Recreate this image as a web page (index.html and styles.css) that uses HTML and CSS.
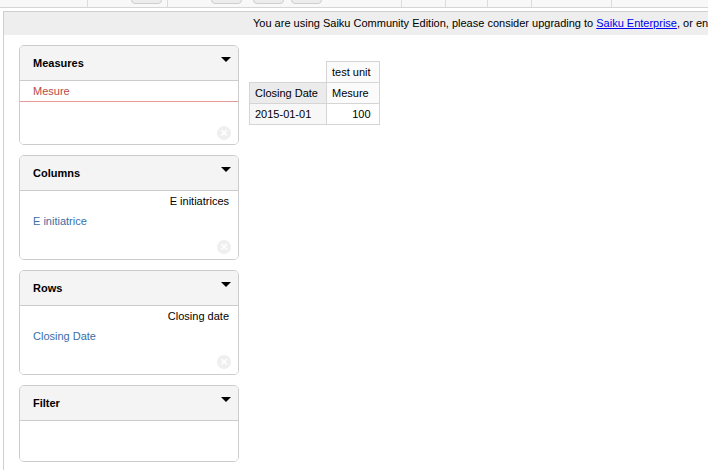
FILE: index.html
```html
<!DOCTYPE html>
<html lang="en">
  <head>
    <meta charset="UTF-8" />
    <meta name="viewport" content="width=device-width, initial-scale=1.0" />
    <title>Saiku</title>
    <link rel="stylesheet" href="styles.css">
  </head>
  <body>
    <div class="toolbar">
      <div class="seg seg-a"></div>
      <div class="seg seg-b"><span class="tbtn tbtn-1"></span></div>
      <div class="seg seg-c">
        <span class="tbtn tbtn-2"></span>
        <span class="tbtn tbtn-3"></span>
        <span class="tbtn tbtn-4"></span>
      </div>
      <div class="seg seg-d"></div>
      <div class="seg seg-e"></div>
      <div class="seg seg-f"></div>
      <div class="seg seg-g"></div>
      <div class="seg seg-h"></div>
    </div>

    <main class="workspace">
      <div class="upgrade">
        You are using Saiku Community Edition, please consider upgrading to <a href="#">Saiku Enterprise</a>, or entering a sponsorship agreement with us to support development.
      </div>

      <div class="workarea">
        <section class="drop-panels">
          <div class="card card-measures">
            <div class="card-head">
              <h3>Measures</h3>
              <span class="caret"></span>
            </div>
            <div class="card-body">
              <div class="measure">Mesure</div>
              <span class="clear">&times;</span>
            </div>
          </div>

          <div class="card card-axis">
            <div class="card-head">
              <h3>Columns</h3>
              <span class="caret"></span>
            </div>
            <div class="card-body">
              <div class="dim-name">E initiatrices</div>
              <div class="level">E initiatrice</div>
              <span class="clear">&times;</span>
            </div>
          </div>

          <div class="card card-axis">
            <div class="card-head">
              <h3>Rows</h3>
              <span class="caret"></span>
            </div>
            <div class="card-body">
              <div class="dim-name">Closing date</div>
              <div class="level">Closing Date</div>
              <span class="clear">&times;</span>
            </div>
          </div>

          <div class="card card-filter">
            <div class="card-head">
              <h3>Filter</h3>
              <span class="caret"></span>
            </div>
            <div class="card-body"></div>
          </div>
        </section>

        <section class="result">
          <table class="pivot">
            <tr>
              <td class="blank"></td>
              <th class="col-head">test unit</th>
            </tr>
            <tr>
              <th class="row-head">Closing Date</th>
              <th class="col-head">Mesure</th>
            </tr>
            <tr>
              <th class="row-member">2015-01-01</th>
              <td class="data">100</td>
            </tr>
          </table>
        </section>
      </div>
    </main>
  </body>
</html>
```

FILE: styles.css
```css
body {
  margin: 0;
  font-family: "Liberation Sans", Arial, Helvetica, sans-serif;
  font-size: 11px;
  color: #000;
  background: #fff;
  overflow: hidden;
}

.toolbar {
  display: flex;
  height: 7px;
  background: #f8f8f8;
  border-bottom: 1px solid #d6d6d6;
}

.seg {
  position: relative;
  border-right: 1px solid #dcdcdc;
  flex-shrink: 0;
}

.seg-a { width: 87px; }
.seg-b { width: 79px; }
.seg-c { width: 233px; }
.seg-d { width: 43px; }
.seg-e { width: 41px; }
.seg-f { width: 43px; }
.seg-g { width: 79px; }
.seg-h { flex: 1; border-right: none; }

.tbtn {
  position: absolute;
  top: -2px;
  height: 4px;
  width: 29px;
  background: #ececec;
  border: 1px solid #cfcfcf;
  border-radius: 0 0 4px 4px;
}

.tbtn-1 { left: 43px; }
.tbtn-2 { left: 43px; }
.tbtn-3 { left: 85px; }
.tbtn-4 { left: 123px; }

.workspace {
  margin: 3px 0 0 3px;
  border-left: 1px solid #cfcfcf;
  height: 460px;
}

.upgrade {
  height: 23px;
  line-height: 23px;
  background: #eee;
  border-top: 1px solid #cfcfcf;
  padding-left: 249px;
  white-space: nowrap;
  overflow: hidden;
}

.upgrade a {
  color: #00e;
  text-decoration: underline;
}

.workarea {
  display: flex;
  align-items: flex-start;
  padding: 10px 0 0 15px;
}

.drop-panels {
  width: 220px;
  display: flex;
  flex-direction: column;
  gap: 10px;
}

.card {
  border: 1px solid #ccc;
  border-radius: 5px;
  overflow: hidden;
}

.card-head {
  display: flex;
  justify-content: space-between;
  align-items: flex-start;
  height: 34px;
  background: #f4f4f4;
  border-bottom: 1px solid #ccc;
  padding: 0 7px 0 13px;
}

.card-head h3 {
  margin: 0;
  font-size: 11px;
  font-weight: bold;
  line-height: 34px;
}

.caret {
  margin-top: 11px;
  width: 0;
  height: 0;
  border-left: 5px solid transparent;
  border-right: 5px solid transparent;
  border-top: 5px solid #000;
}

.card-body {
  display: flex;
  flex-direction: column;
  background: #fff;
}

.card-measures .card-body { height: 59px; padding-bottom: 4px; }
.card-axis .card-body { height: 63px; padding-bottom: 5px; }
.card-filter .card-body { height: 40px; }

.measure {
  color: #b94a48;
  line-height: 20px;
  padding-left: 13px;
  border-bottom: 1px solid #e59a98;
}

.dim-name {
  text-align: right;
  padding: 4px 9px 0 0;
  line-height: 12px;
}

.level {
  color: #3a6ea8;
  padding: 8px 0 0 13px;
  line-height: 12px;
}

.clear {
  margin-top: auto;
  align-self: flex-end;
  margin-right: 7px;
  width: 14px;
  height: 14px;
  border-radius: 50%;
  background: #efefef;
  color: #fff;
  font-size: 13px;
  font-weight: bold;
  line-height: 14px;
  text-align: center;
}

.result {
  margin: 16px 0 0 10px;
}

.pivot {
  border-collapse: collapse;
  font-size: 11px;
}

.pivot th,
.pivot td {
  height: 20px;
  padding: 0 8px 0 5px;
  border: 1px solid #d5d5d5;
  font-weight: normal;
  text-align: left;
  white-space: nowrap;
}

.pivot .blank {
  border: none;
  border-bottom: 1px solid #d5d5d5;
}

.pivot .row-head {
  background: #ebebeb;
}

.pivot .col-head {
  background: #fbfbfb;
}

.pivot .row-member {
  background: #f7f7f7;
}

.pivot .data {
  text-align: right;
  background: #fff;
}
```
